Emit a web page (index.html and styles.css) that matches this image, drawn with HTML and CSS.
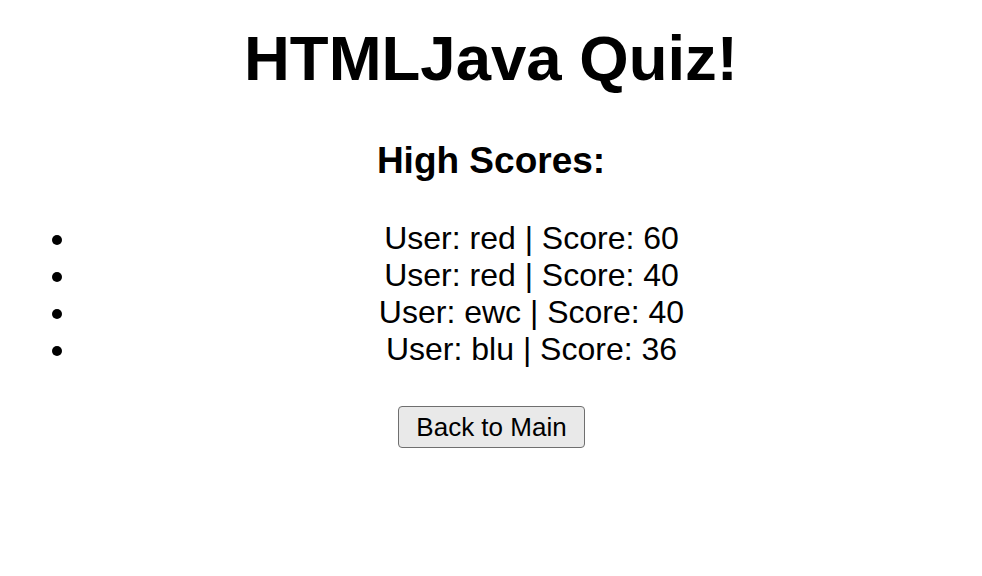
FILE: index.html
```html
<!DOCTYPE html>
<html lang="en">
<head>
<meta charset="utf-8">
<title>HTMLJava Quiz!</title>
<link rel="stylesheet" href="styles.css">
</head>
<body>
<main class="page">
  <h1 class="title">HTMLJava Quiz!</h1>
  <h2 class="subtitle">High Scores:</h2>
  <ul class="scores">
    <li class="score"><span class="dot"></span><span class="score-text">User: red | Score: 60</span></li>
    <li class="score"><span class="dot"></span><span class="score-text">User: red | Score: 40</span></li>
    <li class="score"><span class="dot"></span><span class="score-text">User: ewc | Score: 40</span></li>
    <li class="score"><span class="dot"></span><span class="score-text">User: blu | Score: 36</span></li>
  </ul>
  <div class="actions">
    <button class="back-btn" type="button">Back to Main</button>
  </div>
</main>
</body>
</html>
```
FILE: styles.css
```css
html, body {
  margin: 0;
  padding: 0;
  background: #ffffff;
}
body {
  font-family: "Liberation Sans", Arial, sans-serif;
  color: #000000;
}
.page {
  padding-top: 22px;
  display: flex;
  flex-direction: column;
}
.title {
  margin: 0;
  font-size: 63.5px;
  line-height: 72px;
  font-weight: bold;
  text-align: center;
}
.subtitle {
  margin: 47px 0 0;
  font-size: 37px;
  line-height: 40px;
  font-weight: bold;
  text-align: center;
}
.scores {
  margin: 39px 0 0;
  padding: 0;
  list-style: none;
}
.score {
  display: flex;
  align-items: center;
  padding-left: 52px;
  font-size: 32px;
  line-height: 37px;
}
.dot {
  flex: none;
  width: 10px;
  height: 10px;
  margin-top: 3px;
  border-radius: 50%;
  background: #000000;
}
.score-text {
  flex: 1;
  margin-left: 19px;
  text-align: center;
}
.actions {
  margin-top: 38px;
  display: flex;
  justify-content: center;
}
.back-btn {
  font-family: "Liberation Sans", Arial, sans-serif;
  font-size: 26px;
  line-height: 30px;
  padding: 5px 17px;
  color: #000000;
  background: #e9e9e9;
  border: 1px solid #6f6f6f;
  border-radius: 4px;
  margin-left: 1px;
}
```
